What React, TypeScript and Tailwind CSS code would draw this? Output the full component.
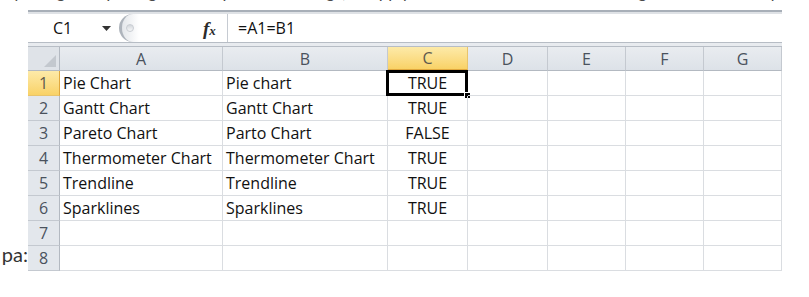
import React from 'react';

// Excel 2010 style sheet: columns and rows as in the screenshot
const COLUMNS = [
  { key: 'A', width: 'w-[163px]' },
  { key: 'B', width: 'w-[165px]' },
  { key: 'C', width: 'w-[80px]' },
  { key: 'D', width: 'w-[80px]' },
  { key: 'E', width: 'w-[78px]' },
  { key: 'F', width: 'w-[78px]' },
  { key: 'G', width: 'w-[78px]' },
];

const ROWS: string[][] = [
  ['Pie Chart', 'Pie chart', 'TRUE'],
  ['Gantt Chart', 'Gantt Chart', 'TRUE'],
  ['Pareto Chart', 'Parto Chart', 'FALSE'],
  ['Thermometer Chart', 'Thermometer Chart', 'TRUE'],
  ['Trendline', 'Trendline', 'TRUE'],
  ['Sparklines', 'Sparklines', 'TRUE'],
  [],
  [],
];

function FormulaBar() {
  return (
    <div className="flex h-[28px] items-center bg-white">
      {/* Name box */}
      <div className="flex h-full w-[91px] items-center pl-[25px] pr-[8px]">
        <span className="flex-1 text-[16px] text-[#111]">C1</span>
        <svg width="9" height="5" viewBox="0 0 9 5">
          <path d="M0 0 H9 L4.5 5 Z" fill="#333" />
        </svg>
      </div>

      {/* Splitter knob */}
      <div className="relative flex h-full w-[20px] items-center rounded-l-[14px] border-l-[3px] border-[#aeb4bc] bg-gradient-to-r from-[#e4e7eb] to-white">
        <div className="ml-[4px] h-[8px] w-[8px] rounded-full border border-[#c9cdd3] bg-gradient-to-b from-[#d3d7dc] to-[#f6f7f8]" />
      </div>

      <div className="flex-1" />

      {/* fx */}
      <div className="flex h-full w-[24px] items-center pr-[6px]">
        <span className="font-['Liberation_Serif'] text-[19px] font-bold italic leading-none text-[#2b2b2b]">
          f<span className="text-[13px]">x</span>
        </span>
      </div>

      {/* Formula input */}
      <div className="flex h-full w-[555px] items-center border-l border-[#c6cbd2] pl-[10px]">
        <span className="text-[16px] text-[#111]">=A1=B1</span>
      </div>
    </div>
  );
}

function HeaderRow() {
  return (
    <div className="flex h-[24px]">
      <div className="relative w-[32px] border-b border-r border-[#b3b9c1] bg-[#dfe3e8]">
        <svg className="absolute bottom-[3px] right-[3px]" width="12" height="12" viewBox="0 0 12 12">
          <path d="M12 0 V12 H0 Z" fill="#c3c8ce" />
        </svg>
      </div>
      {COLUMNS.map((col) => (
        <div
          key={col.key}
          className={`${col.width} flex items-center justify-center border-r text-[16px] ${
            col.key === 'C'
              ? 'border-b-2 border-b-[#e0a83e] border-r-[#e8c46c] bg-gradient-to-b from-[#fdeaa8] to-[#f9d266] text-[#5e5a4e]'
              : 'border-b border-[#c4c9d0] border-b-[#b3b9c1] bg-gradient-to-b from-[#e9ecf0] to-[#dde2e8] text-[#4a525d]'
          }`}
        >
          {col.key}
        </div>
      ))}
    </div>
  );
}

function SheetRow({ index, cells }: { index: number; cells: string[] }) {
  const active = index === 1;
  return (
    <div className="flex h-[25px]">
      <div
        className={`flex w-[32px] items-center justify-center border-b border-r text-[16px] ${
          active
            ? 'border-b-[#e8c46c] border-r-[#e0a83e] bg-gradient-to-b from-[#fdeaa8] to-[#f9d266] text-[#5e5a4e]'
            : 'border-[#c4c9d0] border-r-[#b3b9c1] bg-[#e3e7ec] text-[#4a525d]'
        }`}
      >
        {index}
      </div>
      {COLUMNS.map((col, i) => (
        <div
          key={col.key}
          className={`${col.width} relative flex items-center border-b border-r border-[#dadde1] text-[16px] text-[#111] ${
            col.key === 'C' ? 'justify-center' : 'pl-[3px]'
          }`}
        >
          <span className="whitespace-nowrap">{cells[i] ?? ''}</span>
          {active && col.key === 'C' && (
            <>
              <div className="absolute -left-[2px] -top-[1px] bottom-[-1px] right-[-1px] border-[3px] border-black" />
              <div className="absolute -bottom-[4px] -right-[4px] h-[7px] w-[7px] border border-white bg-black" />
            </>
          )}
        </div>
      ))}
    </div>
  );
}

export default function App() {
  return (
    <div className="relative h-[297px] w-[809px] overflow-hidden bg-white font-['Open_Sans',sans-serif]">
      {/* line of page text above, cut off by the crop */}
      <div className="h-[10px] overflow-hidden">
        <p className="-mt-[17px] whitespace-nowrap pl-[4px] font-['Lato',sans-serif] text-[17px] leading-[17px] text-[#4a4a4a]">
          by using an equal sign to compare two strings, or apply the EXACT formula to this range of data to verify
        </p>
      </div>

      <div className="flex">
        {/* left gutter with cut-off page text */}
        <div className="flex w-[28px] flex-col justify-end pb-[7px]">
          <span className="text-right font-['Lato',sans-serif] text-[20px] leading-none text-[#333]">pa:</span>
        </div>

        {/* spreadsheet frame */}
        <div className="w-[754px]">
          <div className="h-[4px] border-t-2 border-[#a8afb8] bg-[#dfe2e6]" />
          <FormulaBar />
          <div className="h-[5px] border-y border-[#b7bdc5] bg-[#e8ebef]" />
          <HeaderRow />
          {ROWS.map((cells, i) => (
            <SheetRow key={i} index={i + 1} cells={cells} />
          ))}
        </div>
      </div>
    </div>
  );
}
